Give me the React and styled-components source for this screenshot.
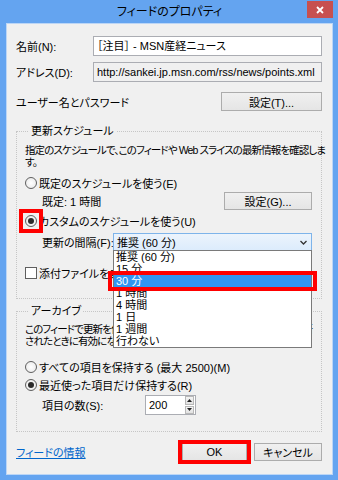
import styled, { createGlobalStyle } from "styled-components";

const GlobalStyle = createGlobalStyle`
  html, body {
    margin: 0;
    padding: 0;
  }
  body {
    width: 338px;
    height: 480px;
    overflow: hidden;
    font-family: "Liberation Sans", "Noto Sans CJK JP", sans-serif;
    font-size: 11px;
    font-feature-settings: "palt";
    white-space: nowrap;
    color: #000;
  }
`;

const Frame = styled.div`
  width: 338px;
  height: 480px;
  box-sizing: border-box;
  background: #64a4f0;
  padding: 0 5px 5px 6px;
  display: flex;
  flex-direction: column;
`;

const TitleBar = styled.div`
  height: 23px;
  flex-shrink: 0;
  display: grid;
  grid-template-columns: 1fr auto 1fr;
  align-items: start;
`;

const Title = styled.div`
  grid-column: 2;
  font-size: 12px;
  line-height: 24px;
  color: #000;
`;

const CloseButton = styled.div`
  grid-column: 3;
  justify-self: end;
  width: 26px;
  height: 17px;
  margin-top: 1px;
  background: #c75050;
  color: #fff;
  display: flex;
  align-items: center;
  justify-content: center;
`;

const Client = styled.div`
  flex: 1;
  background: #f0f0f0;
  border: 1px solid #bcd6f6;
  padding: 12px 10px 0 9px;
  display: flex;
  flex-direction: column;
`;

const FieldRow = styled.div`
  display: grid;
  grid-template-columns: 77px 1fr;
  align-items: center;
  margin-top: ${(p) => p.$mt || 0}px;
`;

const TextBox = styled.div`
  height: 20px;
  box-sizing: border-box;
  border: 1px solid #abadb3;
  background: ${(p) => (p.$readOnly ? "#f0f0f0" : "#fff")};
  padding: 0 3px;
  line-height: 18px;
  overflow: hidden;
`;

const SplitRow = styled.div`
  display: flex;
  align-items: center;
  justify-content: ${(p) => (p.$start ? "flex-start" : "space-between")};
  margin-top: ${(p) => p.$mt || 0}px;
  padding-left: ${(p) => p.$indent || 0}px;
`;

const Button = styled.div`
  width: ${(p) => p.$w}px;
  height: ${(p) => p.$h || 18}px;
  box-sizing: border-box;
  border: 1px solid #acacac;
  background: linear-gradient(#f0f0f0, #e5e5e5);
  display: flex;
  align-items: center;
  justify-content: center;
`;

const Group = styled.fieldset`
  margin: ${(p) => p.$mt || 0}px 0 0 0;
  border: 1px dotted #c6c6c6;
  padding: 0 9px ${(p) => p.$pb || 0}px 8px;
  min-width: 0;
`;

const Legend = styled.legend`
  margin-left: 4px;
  padding: 0 2px;
  line-height: 14px;
`;

const Desc = styled.div`
  margin-top: ${(p) => p.$mt || 0}px;
  font-size: 10.5px;
  line-height: 12px;
  letter-spacing: -0.9px;
`;

const Option = styled.div`
  display: flex;
  align-items: center;
  gap: 2px;
  height: 14px;
  margin-top: ${(p) => p.$mt || 0}px;
`;

const RadioCircle = styled.span`
  width: 12px;
  height: 12px;
  box-sizing: border-box;
  border-radius: 50%;
  border: 1px solid #5f5f5f;
  background: radial-gradient(#ffffff, #e6e6e6);
  display: grid;
  place-items: center;
  flex-shrink: 0;

  &::after {
    content: "";
    width: 6px;
    height: 6px;
    border-radius: 50%;
    background: ${(p) => (p.$checked ? "#2a2a2a" : "transparent")};
  }
`;

const CheckSquare = styled.span`
  width: 12px;
  height: 12px;
  box-sizing: border-box;
  border: 1px solid #5f5f5f;
  background: #fff;
  flex-shrink: 0;
`;

// red annotation frame drawn over an element
const Mark = styled.span`
  position: relative;
  display: ${(p) => (p.$block ? "block" : "inline-flex")};

  &::after {
    content: "";
    position: absolute;
    inset: -${(p) => p.$y}px -${(p) => p.$x}px;
    border: 4px solid #ff0000;
    pointer-events: none;
  }
`;

const IntervalLabel = styled.span`
  width: 70px;
  flex-shrink: 0;
`;

const Combo = styled.div`
  position: relative;
  width: 199px;
  height: 18px;
  box-sizing: border-box;
  border: 1px solid #7eb4ea;
  background: linear-gradient(#ecf4fc, #dcecfc);
  display: flex;
  align-items: center;
  justify-content: space-between;
  padding: 0 4px 0 3px;
`;

const DropList = styled.div`
  position: absolute;
  top: 100%;
  left: -1px;
  width: 199px;
  box-sizing: border-box;
  border: 1px solid #7a7a7a;
  background: #fff;
  z-index: 5;
`;

const ListItem = styled.div`
  height: 12px;
  line-height: 12px;
  padding-left: 2px;
  background: ${(p) => (p.$selected ? "#3296f2" : "transparent")};
  color: ${(p) => (p.$selected ? "#fff" : "#000")};
`;

const SpinBox = styled.div`
  width: 51px;
  height: 20px;
  box-sizing: border-box;
  border: 1px solid #abadb3;
  background: #fff;
  display: flex;
  align-items: center;
`;

const SpinValue = styled.span`
  flex: 1;
  padding-left: 3px;
`;

const SpinButtons = styled.div`
  width: 9px;
  height: 18px;
  display: flex;
  flex-direction: column;
  gap: 1px;
  margin-right: 1px;
`;

const SpinButton = styled.div`
  flex: 1;
  border: 1px solid #b8b8b8;
  background: linear-gradient(#f4f4f4, #e2e2e2);
  display: flex;
  align-items: center;
  justify-content: center;
`;

const SpinLabel = styled.span`
  width: 103px;
  flex-shrink: 0;
`;

const Footer = styled.div`
  display: flex;
  align-items: center;
  gap: 7px;
  margin-top: 11px;
`;

const InfoLink = styled.a`
  flex: 1;
  color: #0066cc;
  text-decoration: underline;
`;

const intervals = ["推奨 (60 分)", "15 分", "30 分", "1 時間", "4 時間", "1 日", "1 週間", "行わない"];

const Radio = ({ checked, marked }) =>
  marked ? (
    <Mark $x={6} $y={6}>
      <RadioCircle $checked={checked} />
    </Mark>
  ) : (
    <RadioCircle $checked={checked} />
  );

const Chevron = () => (
  <svg width="7" height="5" viewBox="0 0 7 5">
    <path d="M0.5 1 L3.5 4 L6.5 1" fill="none" stroke="#333" strokeWidth="1.3" />
  </svg>
);

const Triangle = ({ up }) => (
  <svg width="5" height="3" viewBox="0 0 5 3">
    <path d={up ? "M0 3 L2.5 0 L5 3 Z" : "M0 0 L2.5 3 L5 0 Z"} fill="#222" />
  </svg>
);

const App = () => {
  return (
    <>
      <GlobalStyle />
      <Frame>
        <TitleBar>
          <Title>フィードのプロパティ</Title>
          <CloseButton>
            <svg width="8" height="8" viewBox="0 0 8 8">
              <path d="M1 1 L7 7 M7 1 L1 7" stroke="#fff" strokeWidth="1.8" />
            </svg>
          </CloseButton>
        </TitleBar>

        <Client>
          <FieldRow>
            <span>名前(N):</span>
            <TextBox>［注目］ - MSN産経ニュース</TextBox>
          </FieldRow>
          <FieldRow $mt={6}>
            <span>アドレス(D):</span>
            <TextBox $readOnly>http://sankei.jp.msn.com/rss/news/points.xml</TextBox>
          </FieldRow>
          <SplitRow $mt={10}>
            <span>ユーザー名とパスワード</span>
            <Button $w={101} $h={19}>設定(T)...</Button>
          </SplitRow>

          <Group $mt={13} $pb={18}>
            <Legend>更新スケジュール</Legend>
            <Desc $mt={6}>
              指定のスケジュールで、このフィードや Web スライスの最新情報を確認しま
              <br />
              す。
            </Desc>
            <Option $mt={8}>
              <Radio />
              <span>既定のスケジュールを使う(E)</span>
            </Option>
            <SplitRow $mt={2} $indent={17}>
              <span>既定: 1 時間</span>
              <Button $w={88}>設定(G)...</Button>
            </SplitRow>
            <Option $mt={4}>
              <Radio checked marked />
              <span>カスタムのスケジュールを使う(U)</span>
            </Option>
            <SplitRow $mt={5} $indent={17}>
              <IntervalLabel>更新の間隔(F):</IntervalLabel>
              <Combo>
                <span>推奨 (60 分)</span>
                <Chevron />
                <DropList>
                  {intervals.map((item) =>
                    item === "30 分" ? (
                      <Mark key={item} $block $x={6} $y={4}>
                        <ListItem $selected>{item}</ListItem>
                      </Mark>
                    ) : (
                      <ListItem key={item}>{item}</ListItem>
                    )
                  )}
                </DropList>
              </Combo>
            </SplitRow>
            <Option $mt={15}>
              <CheckSquare />
              <span>添付ファイルを自動的にダウンロードする(A)</span>
            </Option>
          </Group>

          <Group $mt={5} $pb={16}>
            <Legend>アーカイブ</Legend>
            <Desc $mt={5}>
              このフィードで更新を保持する方法を指定します。設定はフィードが更新
              <br />
              されたときに有効になります。
            </Desc>
            <Option $mt={13}>
              <Radio />
              <span>すべての項目を保持する (最大 2500)(M)</span>
            </Option>
            <Option $mt={4}>
              <Radio checked />
              <span>最近使った項目だけ保持する(R)</span>
            </Option>
            <SplitRow $mt={3} $indent={17} $start>
              <SpinLabel>項目の数(S):</SpinLabel>
              <SpinBox>
                <SpinValue>200</SpinValue>
                <SpinButtons>
                  <SpinButton>
                    <Triangle up />
                  </SpinButton>
                  <SpinButton>
                    <Triangle />
                  </SpinButton>
                </SpinButtons>
              </SpinBox>
            </SplitRow>
          </Group>

          <Footer>
            <InfoLink href="#">フィードの情報</InfoLink>
            <Mark $x={4} $y={3}>
              <Button $w={65}>OK</Button>
            </Mark>
            <Button $w={68}>キャンセル</Button>
          </Footer>
        </Client>
      </Frame>
    </>
  );
};

export default App;
